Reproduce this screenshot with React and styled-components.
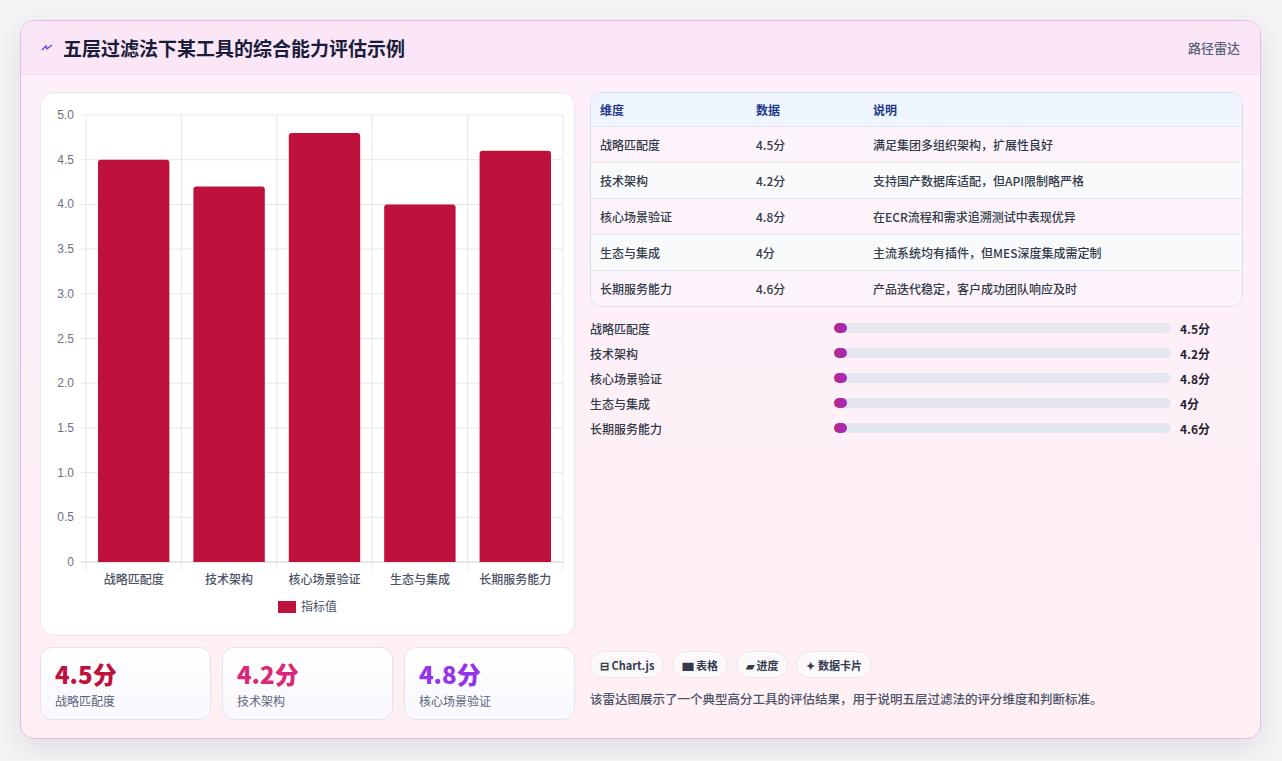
import React from "react";
import styled, { createGlobalStyle } from "styled-components";

const G = createGlobalStyle`
  html,body{margin:0;padding:0;background:#f3f3f5;}
  body{font-family:"Noto Sans CJK SC","Noto Sans",sans-serif;}
`;
const Page = styled.div`padding:20px 20px 21px 20px;`;
const Card = styled.div`
  width:1241px;height:719px;box-sizing:border-box;border:1px solid #e6b8f0;border-radius:14px;
  background:linear-gradient(180deg,#fdf0fb,#fff0f4);overflow:hidden;display:flex;flex-direction:column;
  box-shadow:0 10px 24px rgba(0,0,0,0.08);
`;
const Header = styled.div`
  height:55px;box-sizing:border-box;display:flex;align-items:center;justify-content:space-between;
  padding:0 20px;background:#fbe6f8;border-bottom:1px solid #ecdff5;
`;
const Title = styled.h1`margin:0;font-size:19px;font-weight:700;color:#1a1d3a;display:flex;align-items:center;gap:10px;`;
const HeadTag = styled.span`font-size:13px;color:#5b6478;font-weight:500;`;
const Body = styled.div`flex:1;display:grid;grid-template-columns:535px 653px;gap:15px;padding:17px 18px 18px 19px;`;
const Col = styled.div`display:flex;flex-direction:column;gap:11px;`;
const ChartBox = styled.div`height:544px;background:#fff;border:1px solid #e8e6f0;border-radius:14px;box-sizing:border-box;`;
const Stats = styled.div`display:grid;grid-template-columns:repeat(3,1fr);gap:11px;`;
const Stat = styled.div`height:73px;box-sizing:border-box;border:1px solid #e4e2f2;border-radius:12px;background:linear-gradient(180deg,#fff,#f8f8fe);padding:10px 14px;`;
const Big = styled.div`font-size:24px;font-weight:800;color:${p=>p.c};line-height:32px;`;
const Small = styled.div`font-size:12px;color:#5b6478;margin-top:2px;`;
const Table = styled.div`border:1px solid #d8dcec;border-radius:12px;overflow:hidden;background:#fff;`;
const Row = styled.div`
  display:grid;grid-template-columns:156px 117px 1fr;height:${p=>p.h?33:35}px;align-items:center;padding-left:9px;
  font-size:12px;font-weight:${p=>p.h?700:500};color:${p=>p.h?"#1e3a8a":"#333a48"};
  background:${p=>p.h?"#eef5fe":p.alt?"#f8fafc":"#fdf4fb"};border-top:${p=>p.h?"none":"1px solid #e6e8f0"};
`;
const Bars = styled.div`display:flex;flex-direction:column;gap:7px;margin-top:12px;`;
const BarRow = styled.div`display:grid;grid-template-columns:244px 337px 1fr;gap:0;align-items:center;height:18px;font-size:12px;color:#333a48;font-weight:500;`;
const Track = styled.div`height:10px;border-radius:5px;background:#e4e7f0;position:relative;`;
const Fill = styled.div`position:absolute;left:0;top:0;height:10px;width:13px;border-radius:5px;background:linear-gradient(90deg,#c0267a,#9b2bd0);`;
const Val = styled.span`font-weight:700;color:#1f2433;padding-left:9px;`;
const Spacer = styled.div`flex:1;`;
const Tags = styled.div`display:flex;gap:8px;`;
const Tag = styled.span`height:27px;box-sizing:border-box;padding:0 9px;border:1px solid #ebe7ef;border-radius:14px;background:#fbf9fc;display:inline-flex;align-items:center;gap:4px;font-size:11px;font-weight:700;color:#353b4b;`;
const Note = styled.p`margin:11px 0 12px;font-size:12.5px;color:#4b5366;font-weight:500;`;

const data=[["战略匹配度",4.5,"满足集团多组织架构，扩展性良好"],["技术架构",4.2,"支持国产数据库适配，但API限制略严格"],["核心场景验证",4.8,"在ECR流程和需求追溯测试中表现优异"],["生态与集成",4,"主流系统均有插件，但MES深度集成需定制"],["长期服务能力",4.6,"产品迭代稳定，客户成功团队响应及时"]];

function Chart(){
  const x0=45,x1=522,y0=22,y1=469,w=(x1-x0)/5;
  const yv=v=>y1-(v/5)*(y1-y0);
  return <svg width="533" height="542" style={{display:"block"}}>
    {[0,1,2,3,4,5,6,7,8,9,10].map(i=>{const v=i*0.5;const y=yv(v);return <g key={i}>
      <line x1={x0-5} x2={x1} y1={y} y2={y} stroke={i===0?"#c8ccd6":"#e5e7ee"}/>
      <text x={x0-12} y={y+4} fontSize="12" fill="#6b7280" textAnchor="end" fontFamily="Liberation Sans">{i===0?"0":v.toFixed(1)}</text></g>})}
    {[0,1,2,3,4,5].map(i=><line key={i} x1={x0+i*w} x2={x0+i*w} y1={y0} y2={y1+8} stroke="#e5e7ee"/>)}
    {data.map((d,i)=>{const bx=x0+i*w+12,bw=w-24,by=yv(d[1]);return <g key={i}>
      <path d={`M${bx},${y1} V${by+3} Q${bx},${by} ${bx+3},${by} H${bx+bw-3} Q${bx+bw},${by} ${bx+bw},${by+3} V${y1}Z`} fill="#be123c"/>
      <text x={bx+bw/2} y={y1+22} fontSize="12" fontWeight="500" fill="#4b5366" textAnchor="middle">{d[0]}</text></g>})}
    <rect x="237" y="508" width="18" height="12" fill="#be123c"/>
    <text x="260" y="518" fontSize="12" fill="#4b5366">指标值</text>
  </svg>;
}

export default function App(){
  return <Page><G/><Card>
    <Header><Title><svg width="12" height="12" viewBox="0 0 12 12"><path d="M1 8 L5 4 L6 7 L11 3" stroke="#4f46e5" strokeWidth="1.3" fill="none"/></svg>五层过滤法下某工具的综合能力评估示例</Title><HeadTag>路径雷达</HeadTag></Header>
    <Body>
      <Col>
        <ChartBox><Chart/></ChartBox>
        <Stats>
          <Stat><Big c="#be123c">4.5分</Big><Small>战略匹配度</Small></Stat>
          <Stat><Big c="#db2777">4.2分</Big><Small>技术架构</Small></Stat>
          <Stat><Big c="#9333ea">4.8分</Big><Small>核心场景验证</Small></Stat>
        </Stats>
      </Col>
      <Col style={{gap:0}}>
        <Table>
          <Row h><span>维度</span><span>数据</span><span>说明</span></Row>
          {data.map((d,i)=><Row key={i} alt={i%2===1}><span>{d[0]}</span><span>{d[1]}分</span><span>{d[2]}</span></Row>)}
        </Table>
        <Bars>{data.map((d,i)=><BarRow key={i}><span>{d[0]}</span><Track><Fill/></Track><Val>{d[1]}分</Val></BarRow>)}</Bars>
        <Spacer/>
        <Tags><Tag>⊟ Chart.js</Tag><Tag>▆ 表格</Tag><Tag>▰ 进度</Tag><Tag>✦ 数据卡片</Tag></Tags>
        <Note>该雷达图展示了一个典型高分工具的评估结果，用于说明五层过滤法的评分维度和判断标准。</Note>
      </Col>
    </Body>
  </Card></Page>;
}
